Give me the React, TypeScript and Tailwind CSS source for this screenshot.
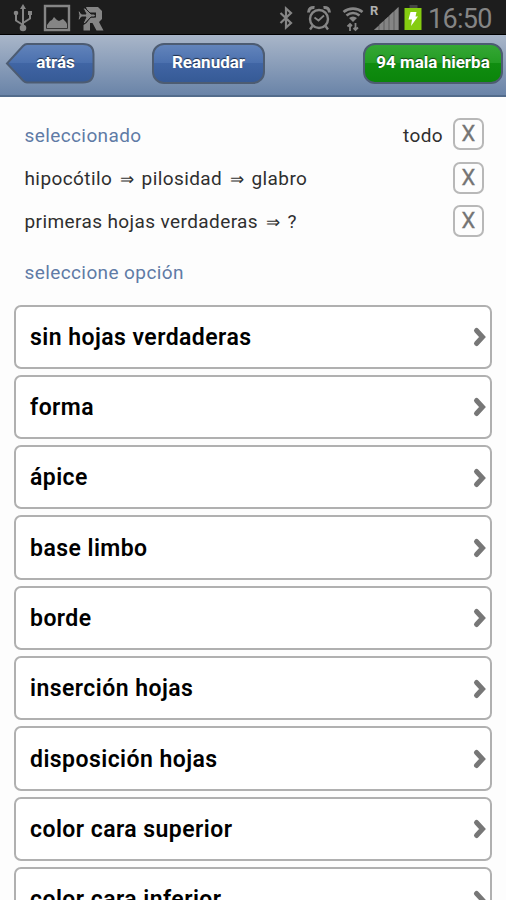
import type { ReactNode } from "react";

const selected = [
  ["hipocótilo", "pilosidad", "glabro"],
  ["primeras hojas verdaderas", "?"],
];

const options = [
  "sin hojas verdaderas",
  "forma",
  "ápice",
  "base limbo",
  "borde",
  "inserción hojas",
  "disposición hojas",
  "color cara superior",
  "color cara inferior",
];

function StatusBar() {
  return (
    <div className="h-[35px] shrink-0 bg-[#1d1d1d] text-[#858585] flex items-center pl-[13px] pr-[13px] border-b border-black">
      {/* usb */}
      <svg className="mt-px" width="20" height="28" viewBox="0 0 20 28" fill="none" stroke="currentColor" strokeWidth="2">
        <path d="M10 3v20M10 21l-7-4.500V10M10 19l7-4.500V10" />
        <path d="M10 0l3 5H7z" fill="currentColor" stroke="none" />
        <circle cx="10" cy="24" r="3.3" fill="currentColor" stroke="none" />
        <circle cx="3" cy="9" r="2.3" fill="currentColor" stroke="none" />
        <path d="M15 7h4v4h-4z" fill="currentColor" stroke="none" />
      </svg>
      {/* gallery */}
      <svg className="ml-[10px] mt-[2px]" width="28" height="28" viewBox="0 0 28 28">
        <path d="M2 2h24v24H2z" fill="none" stroke="currentColor" strokeWidth="2.4" />
        <path d="M4 21l3-4 2-1 2-3 3 3 2 1 4-2 3 3 1 2v4H4z" fill="currentColor" />
      </svg>
      {/* airplane roaming */}
      <svg className="ml-[7px] mt-[2px]" width="26" height="28" viewBox="0 0 26 28">
        <path
          d="M8 3h12l4 4v8l-3 3 4.500 8.500h-7L14.500 19H12v7.500H5.500V21l3-2 4-5.500H18V8.500H10z"
          fill="currentColor"
        />
        <path
          d="M0 7h1.500l2 3H8L5 4h2l6 6h3c1.800 0 1.800 3 0 3h-3l-6 6.500H5L8 13H3.500l-2 3H0l1-4.500z"
          fill="currentColor"
          stroke="#1d1d1d"
          strokeWidth="1"
        />
      </svg>
      <div className="grow" />
      {/* bluetooth */}
      <svg className="mt-[2px]" width="14" height="24" viewBox="0 0 14 24" fill="none" stroke="currentColor" strokeWidth="2.2">
        <path d="M1.500 7l10.500 10L7 21.500V2.500l5 4.500L1.500 17" />
      </svg>
      {/* alarm */}
      <svg className="ml-[14px] mt-[2px]" width="24" height="26" viewBox="0 0 24 26" fill="none" stroke="currentColor" strokeWidth="2.4">
        <circle cx="12" cy="14" r="9" />
        <path d="M7.500 12.500l4 3 5.500-5" strokeWidth="1.800" />
        <path d="M1.500 7.500C1.500 4 4 2 7.500 2.500M22.500 7.500C22.500 4 20 2 16.500 2.500" strokeWidth="3" />
        <path d="M5.500 21L3 24.500M18.500 21l2.500 3.500" />
      </svg>
      {/* wifi */}
      <svg className="ml-[11px] mt-[3px]" width="22" height="26" viewBox="0 0 22 26" fill="none" stroke="currentColor">
        <path d="M1.500 6C7 1.500 15 1.500 20.500 6" strokeWidth="2.800" />
        <path d="M4.500 9.500c4-3.300 9-3.300 13 0" strokeWidth="2.600" />
        <path d="M7 12c2.500-2 5.500-2 8 0l-4 4z" fill="currentColor" stroke="none" />
        <path d="M8 25V18M5.500 20.500L8 18l2 2M13.500 17v7M11.500 22l2 2 2.500-2.500" strokeWidth="1.800" />
      </svg>
      {/* signal */}
      <div className="ml-[6px] flex h-[27px]">
        <span className="w-[4px] font-bold text-[13px] leading-[14px] text-[#b0b0b0]">R</span>
        <svg width="25" height="27" viewBox="0 0 25 27">
          <path d="M24.500 3v23H0z" fill="#5f5f5f" />
          <path
            d="M0 26l4.500-4v4zM5.500 20.500l4-3.500v9h-4zM10.500 16l4-3.500V26h-4zM15.500 11.500l4-4V26h-4zM20.500 7L24.500 3v23h-4z"
            fill="currentColor"
          />
        </svg>
      </div>
      {/* battery */}
      <svg className="ml-[5px] mt-px" width="18" height="27" viewBox="0 0 18 27">
        <path d="M5.500 1h8v3h-8z" fill="#444" />
        <path d="M.5 4h17v22H.5z" fill="#85cc10" />
        <path d="M6.500 8h6l-1 4.500H14L7 22l1-6.500H4.500z" fill="#fff" />
      </svg>
      <span className="ml-[6px] w-[65px] text-[27px] leading-[35px] pt-[4px] tracking-[-0.7px] whitespace-nowrap">16:50</span>
    </div>
  );
}

function NavButton({ className, children }: { className: string; children: ReactNode }) {
  return (
    <button
      className={`h-[41px] rounded-[12px] border-2 border-[#4d5c72] text-white text-[17px] font-bold leading-[35px] pb-[4px] [text-shadow:0_-1px_1px_rgba(0,0,0,0.6)] whitespace-nowrap ${className}`}
    >
      {children}
    </button>
  );
}

function NavBar() {
  return (
    <div className="h-[62px] shrink-0 flex items-start pt-[8px] pl-[5px] pr-[3px] bg-linear-to-b from-[#a9b6c9] to-[#6a84a8] border-b-2 border-[#536c8c]">
      <button className="relative w-[90px] h-[41px] text-white text-[17px] font-bold">
        <svg className="absolute inset-0" width="90" height="41" viewBox="0 0 90 41">
          <defs>
            <linearGradient id="back" x1="0" y1="0" x2="0" y2="1">
              <stop offset="0" stopColor="#6284bb" />
              <stop offset="0.500" stopColor="#4b70ae" />
              <stop offset="0.500" stopColor="#4065a4" />
              <stop offset="1" stopColor="#365a96" />
            </linearGradient>
          </defs>
          <path
            d="M22 1h56c7 0 10.500 4 10.500 10v18c0 7-3.500 10.500-10.500 10.500H22c-2 0-3-1-4-2L2 20.500 18 3c1-1 2-2 4-2z"
            fill="url(#back)"
            stroke="#4d5c72"
            strokeWidth="2"
          />
        </svg>
        <span className="relative block pl-[11px] pb-[2px] [text-shadow:0_-1px_1px_rgba(0,0,0,0.6)]">atrás</span>
      </button>
      <NavButton className="ml-[57px] w-[113px] bg-[linear-gradient(#6284bb,#4b70ae_50%,#4065a4_50%,#365a96)]">
        Reanudar
      </NavButton>
      <NavButton className="ml-auto w-[140px] bg-[linear-gradient(#35a735,#239c23_50%,#108d10_50%,#0b850b)]">
        94 mala hierba
      </NavButton>
    </div>
  );
}

function RemoveButton() {
  return (
    <button className="w-[31px] h-[32px] rounded-[7px] border-2 border-[#b8b8b8] text-[#747474] text-[22px] leading-[28px] [-webkit-text-stroke:0.3px_#747474]">
      X
    </button>
  );
}

export default function App() {
  return (
    <div className="w-full h-[900px] overflow-hidden flex flex-col bg-[#fdfdfd] font-['Roboto',sans-serif]">
      <StatusBar />
      <NavBar />
      <div className="shrink-0 pl-[24.500px] pr-[22px] pt-[15px] text-[19px] tracking-[0.4px] text-[#2f2f2f]">
        <div className="h-[44px] flex items-center">
          <span className="text-[#5f7ba6] pt-[5px]">seleccionado</span>
          <span className="ml-auto mr-[10px] pt-[5px]">todo</span>
          <RemoveButton />
        </div>
        {selected.map((parts) => (
          <div key={parts[0]} className="h-[43.500px] flex items-center justify-between">
            <span className="pt-[2px]">
              {parts.map((part, i) => (
                <span key={part}>
                  {i > 0 && <span className="mx-[7.500px] text-[17px]">⇒</span>}
                  {part}
                </span>
              ))}
            </span>
            <RemoveButton />
          </div>
        ))}
        <div className="h-[61.500px] pt-[15px] text-[#5f7ba6] leading-[30px]">seleccione opción</div>
      </div>
      <ul className="shrink-0 px-[14px] flex flex-col gap-[6px]">
        {options.map((option) => (
          <li
            key={option}
            className="h-[64.300px] shrink-0 flex items-center justify-between pl-[14px] pr-[4px] rounded-[7px] border-2 border-[#b0b0b0] bg-white text-black text-[23px] tracking-[0.45px] font-semibold"
          >
            <span className="pt-[3px]">{option}</span>
            <svg className="mt-px" width="14" height="22" viewBox="0 0 14 22" fill="none" stroke="#777" strokeWidth="5" strokeLinecap="round">
              <path d="M4.500 4.500l6 6.500-6 6.500" />
            </svg>
          </li>
        ))}
      </ul>
    </div>
  );
}
